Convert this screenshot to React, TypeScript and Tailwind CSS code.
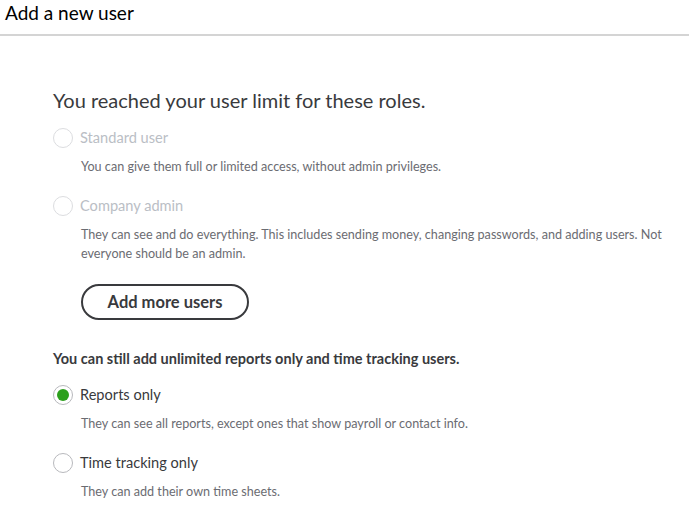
const font = { fontFamily: 'Lato, "Open Sans", sans-serif' }

interface RoleOptionProps {
  label: string
  description: React.ReactNode
  checked?: boolean
  disabled?: boolean
}

function RoleOption({ label, description, checked, disabled }: RoleOptionProps) {
  return (
    <div>
      <div className="flex items-center h-[20px]">
        <span
          className={`w-[20px] h-[20px] rounded-full border flex items-center justify-center shrink-0 ${
            disabled ? 'border-[#dcdde0]' : 'border-[#b8b9bd]'
          }`}
        >
          {checked && <span className="w-[12px] h-[12px] rounded-full bg-[#2ca01c]" />}
        </span>
        <span
          className={`ml-[7px] text-[14.6px] ${disabled ? 'text-[#babec5]' : 'text-[#393a3d]'}`}
        >
          {label}
        </span>
      </div>
      <p className="ml-[28px] mt-[9px] text-[12.6px] leading-[19px] text-[#6b6c72]">
        {description}
      </p>
    </div>
  )
}

export default function App() {
  return (
    <div className="w-[689px] h-[530px] bg-white text-[#393a3d]" style={font}>
      <div className="h-[34px] pl-[5px] text-[19px] leading-[26px] text-black">Add a new user</div>
      <div className="h-[2px] bg-[#d4d4d4]" />

      <div className="pl-[53px] pt-[52px] pr-[10px]">
        <h2 className="text-[20px] leading-[24px] text-[#393a3d]">
          You reached your user limit for these roles.
        </h2>

        <div className="mt-[16px] flex flex-col gap-[20px]">
          <RoleOption
            disabled
            label="Standard user"
            description="You can give them full or limited access, without admin privileges."
          />
          <RoleOption
            disabled
            label="Company admin"
            description={
              <>
                They can see and do everything. This includes sending money, changing passwords, and adding users. Not
                <br />
                everyone should be an admin.
              </>
            }
          />
        </div>

        <button className="ml-[28px] mt-[21px] w-[168px] h-[36px] rounded-full border-2 border-[#393a3d] text-[16.5px] font-bold text-[#393a3d]">
          Add more users
        </button>

        <p className="mt-[30px] text-[14.5px] leading-[18px] font-bold text-[#393a3d]">
          You can still add unlimited reports only and time tracking users.
        </p>

        <div className="mt-[17px] flex flex-col gap-[20px]">
          <RoleOption
            checked
            label="Reports only"
            description="They can see all reports, except ones that show payroll or contact info."
          />
          <RoleOption label="Time tracking only" description="They can add their own time sheets." />
        </div>
      </div>
    </div>
  )
}
